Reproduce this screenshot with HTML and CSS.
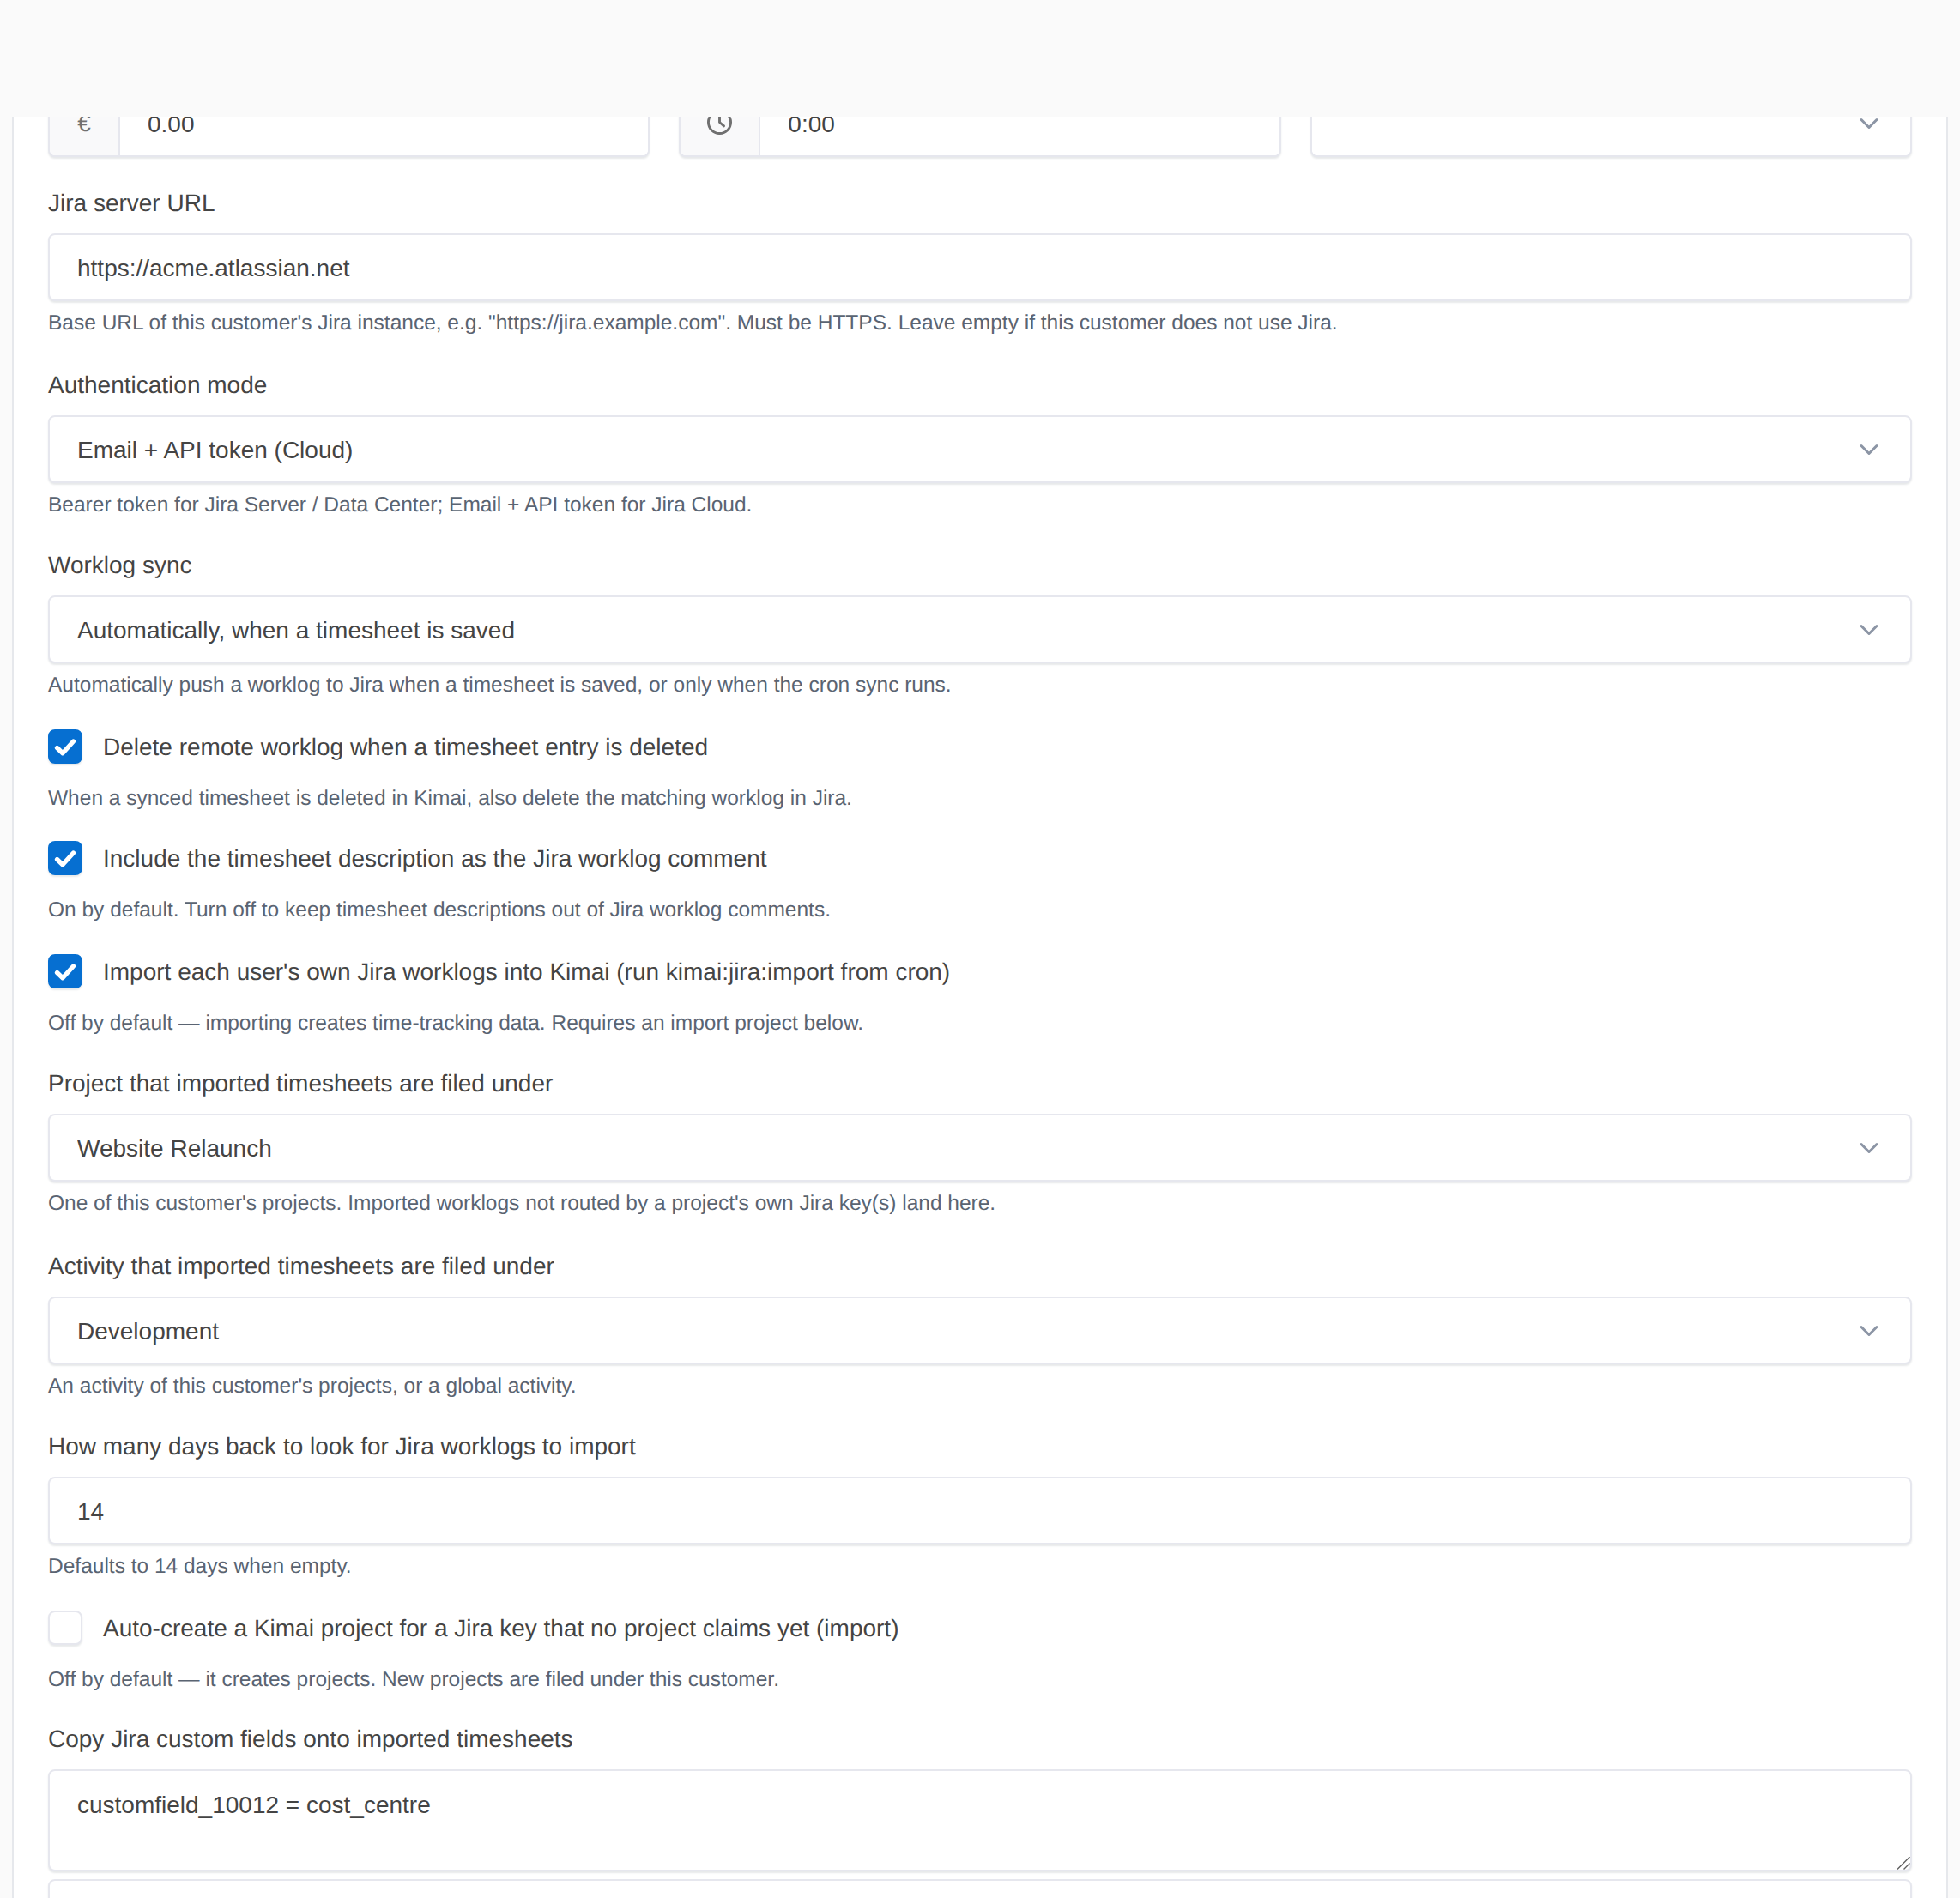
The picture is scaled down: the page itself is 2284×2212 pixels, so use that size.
FILE: index.html
```html
<!DOCTYPE html>
<html lang="en">
<head>
    <meta charset="UTF-8">
    <meta name="viewport" content="width=device-width, initial-scale=1.0">
    <title>Edit customer</title>
    <link rel="stylesheet" href="styles.css">
</head>
<body>
    <!-- Sticky bar lying over the scrolled form -->
    <header class="topbar"></header>

    <main class="page">
        <form class="card">
            <div class="row">
                <div class="input-group">
                    <span class="addon">€</span>
                    <input type="text" class="control" value="0.00">
                </div>
                <div class="input-group">
                    <span class="addon">
                        <svg class="clock" viewBox="2 2 20 20" fill="none" stroke="currentColor" stroke-width="2" stroke-linecap="round" stroke-linejoin="round"><path d="M3 12a9 9 0 1 0 18 0a9 9 0 0 0 -18 0"/><path d="M12 7v5l3.5 3"/></svg>
                    </span>
                    <input type="text" class="control" value="0:00">
                </div>
                <div class="input-group">
                    <select class="control select"><option></option></select>
                </div>
            </div>

            <div class="field field-wide">
                <label>Jira server URL</label>
                <input type="text" class="control" value="https://acme.atlassian.net">
                <p class="hint">Base URL of this customer's Jira instance, e.g. "https://jira.example.com". Must be HTTPS. Leave empty if this customer does not use Jira.</p>
            </div>

            <div class="field">
                <label>Authentication mode</label>
                <select class="control select"><option>Email + API token (Cloud)</option></select>
                <p class="hint">Bearer token for Jira Server / Data Center; Email + API token for Jira Cloud.</p>
            </div>

            <div class="field field-loose">
                <label>Worklog sync</label>
                <select class="control select"><option>Automatically, when a timesheet is saved</option></select>
                <p class="hint">Automatically push a worklog to Jira when a timesheet is saved, or only when the cron sync runs.</p>
            </div>

            <div class="field field-narrow">
                <label class="check"><input type="checkbox" checked>Delete remote worklog when a timesheet entry is deleted</label>
                <p class="hint">When a synced timesheet is deleted in Kimai, also delete the matching worklog in Jira.</p>
            </div>

            <div class="field field-loose">
                <label class="check"><input type="checkbox" checked>Include the timesheet description as the Jira worklog comment</label>
                <p class="hint">On by default. Turn off to keep timesheet descriptions out of Jira worklog comments.</p>
            </div>

            <div class="field">
                <label class="check"><input type="checkbox" checked>Import each user's own Jira worklogs into Kimai (run kimai:jira:import from cron)</label>
                <p class="hint">Off by default — importing creates time-tracking data. Requires an import project below.</p>
            </div>

            <div class="field field-wider">
                <label>Project that imported timesheets are filed under</label>
                <select class="control select"><option>Website Relaunch</option></select>
                <p class="hint">One of this customer's projects. Imported worklogs not routed by a project's own Jira key(s) land here.</p>
            </div>

            <div class="field">
                <label>Activity that imported timesheets are filed under</label>
                <select class="control select"><option>Development</option></select>
                <p class="hint">An activity of this customer's projects, or a global activity.</p>
            </div>

            <div class="field field-loose">
                <label>How many days back to look for Jira worklogs to import</label>
                <input type="text" class="control" value="14">
                <p class="hint">Defaults to 14 days when empty.</p>
            </div>

            <div class="field field-narrow">
                <label class="check"><input type="checkbox">Auto-create a Kimai project for a Jira key that no project claims yet (import)</label>
                <p class="hint">Off by default — it creates projects. New projects are filed under this customer.</p>
            </div>

            <div class="field field-tight">
                <label>Copy Jira custom fields onto imported timesheets</label>
                <textarea class="control area">customfield_10012 = cost_centre</textarea>
            </div>

            <input type="text" class="control">
        </form>
    </main>
</body>
</html>
```

FILE: styles.css
```css
html, body {
    height: 2212px;
    overflow: hidden;
}
body {
    margin: 0;
    background: #fafafa;
    color: #444;
    font-family: "Liberation Sans", Arial, sans-serif;
    font-size: 28px;
    line-height: 40px;
    text-rendering: geometricPrecision;
}
.topbar {
    position: absolute;
    top: 0;
    left: 0;
    right: 0;
    height: 136px;
    background: #fafafa;
    z-index: 10;
}
.page {
    padding: 0 14px;
}
.card {
    background: #fff;
    border-left: 2px solid #e6e8ec;
    border-right: 2px solid #e6e8ec;
    padding: 104px 40px 0;
    height: 2108px;
}
.row {
    display: grid;
    grid-template-columns: repeat(3, 1fr);
    gap: 34px;
    margin-bottom: 34px;
}
.input-group {
    display: flex;
    background: #fff;
    border: 2px solid #e6e7ee;
    border-radius: 8px;
    box-shadow: 0 2px 2px rgba(24, 36, 51, 0.1);
    overflow: hidden;
}
.input-group .control {
    border: 0;
    border-radius: 0;
    box-shadow: none;
    height: 75px;
}
.addon {
    display: flex;
    align-items: center;
    justify-content: center;
    box-sizing: border-box;
    min-width: 82px;
    padding: 0 31px;
    flex: none;
    background: #f9f9fa;
    border-right: 2px solid #e6e7ee;
    color: #707070;
}
.clock {
    width: 29px;
    height: 29px;
    margin-bottom: 3px;
}
.control {
    display: block;
    box-sizing: border-box;
    width: 100%;
    height: 79px;
    padding: 2px 32px 0;
    background: #fff;
    border: 2px solid #e6e7ee;
    border-radius: 8px;
    box-shadow: 0 2px 2px rgba(24, 36, 51, 0.1);
    color: #444;
    font: inherit;
    outline: none;
}
.select {
    appearance: none;
    background-image: url("data:image/svg+xml,%3csvg xmlns='http://www.w3.org/2000/svg' viewBox='0 0 16 16'%3e%3cpath fill='none' stroke='%238c95a5' stroke-linecap='round' stroke-linejoin='round' stroke-width='2' d='M2 5l6 6 6-6'/%3e%3c/svg%3e");
    background-repeat: no-repeat;
    background-position: right 32px center;
    background-size: 32px 24px;
}
.area {
    height: 119px;
    padding: 20px 32px;
    resize: vertical;
}
.area::-webkit-resizer {
    background: url("data:image/svg+xml,%3csvg xmlns='http://www.w3.org/2000/svg' viewBox='0 0 15 15'%3e%3cpath fill='none' stroke='%23606060' stroke-width='1.4' d='M0 14.5L14.5 0M7.5 14.5L14.5 7.5'/%3e%3c/svg%3e") no-repeat center;
}
.field {
    margin-bottom: 34px;
}
.field-loose {
    margin-bottom: 35px;
}
.field-wide {
    margin-bottom: 36px;
}
.field-wider {
    margin-bottom: 37px;
}
.field-narrow {
    margin-bottom: 33px;
}
.field-tight {
    margin-bottom: 9px;
}
.field > label {
    display: block;
    margin-bottom: 15px;
}
.field > label.check {
    display: flex;
    align-items: flex-start;
    gap: 24px;
    height: 40px;
    margin-bottom: 0;
    line-height: 42px;
}
.check input {
    appearance: none;
    box-sizing: border-box;
    width: 40px;
    height: 40px;
    margin: 0;
    flex: none;
    background: #fff;
    border: 2px solid #e6e7ee;
    border-radius: 8px;
    box-shadow: 0 2px 2px rgba(24, 36, 51, 0.1);
}
.check input:checked {
    border-color: #066fd1;
    background-color: #066fd1;
    background-image: url("data:image/svg+xml,%3csvg xmlns='http://www.w3.org/2000/svg' viewBox='0 0 16 16'%3e%3cpath fill='none' stroke='%23fff' stroke-linecap='round' stroke-linejoin='round' stroke-width='2.1' d='M4.2 8.6l2.6 2.5 5-5.5'/%3e%3c/svg%3e");
    background-position: center;
    background-size: 40px 40px;
}
.hint {
    height: 35px;
    margin: 7px 0 0;
    color: #5a6472;
    font-size: 24.5px;
    line-height: 37px;
}
.check + .hint {
    margin-top: 22px;
}
```
